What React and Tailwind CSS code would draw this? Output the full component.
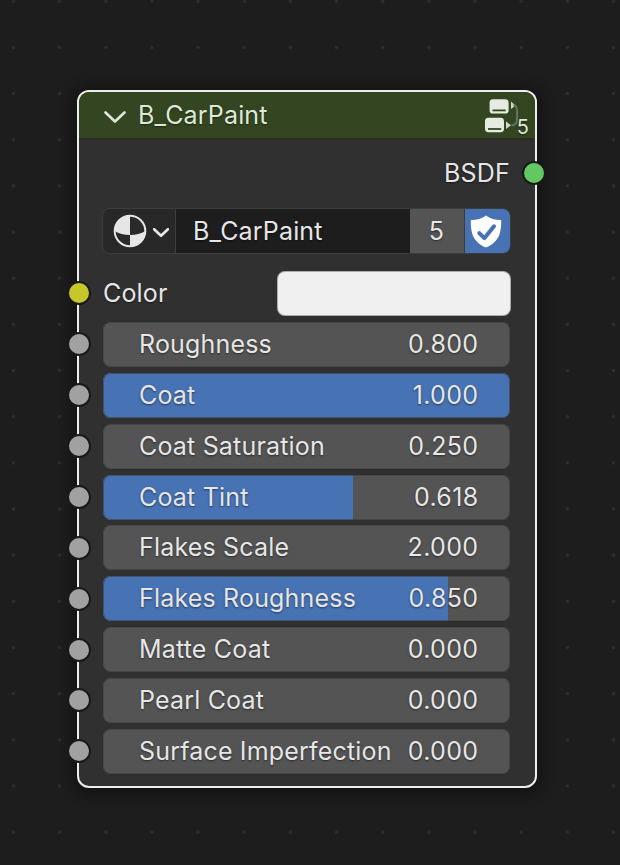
import clsx from 'clsx';

const sliders = [
    { label: 'Roughness', value: '0.800', fill: 0 },
    { label: 'Coat', value: '1.000', fill: 100 },
    { label: 'Coat Saturation', value: '0.250', fill: 0 },
    { label: 'Coat Tint', value: '0.618', fill: 61.5 },
    { label: 'Flakes Scale', value: '2.000', fill: 0 },
    { label: 'Flakes Roughness', value: '0.850', fill: 84.8 },
    { label: 'Matte Coat', value: '0.000', fill: 0 },
    { label: 'Pearl Coat', value: '0.000', fill: 0 },
    { label: 'Surface Imperfection', value: '0.000', fill: 0 },
];

const Socket = ({ className }) => (
    <span className={clsx('absolute top-1/2 -mt-3 h-6 w-6 rounded-full border-2 border-[#191919]', className)} />
);

const Chevron = ({ className, strokeWidth }) => (
    <svg className={className} viewBox="0 0 22 12" fill="none" stroke="currentColor" strokeWidth={strokeWidth} strokeLinecap="round" strokeLinejoin="round">
        <path d="M1.5 1.5 L11 10.5 L20.5 1.5" />
    </svg>
);

const NodeGroupIcon = () => (
    <svg className="h-[36px] w-[34px]" viewBox="0 0 34 36" fill="none">
        <rect x="5.6" y="2.2" width="19" height="14.4" rx="3.4" fill="#e6ebe2" />
        <path d="M8.5 13.4h13.2" stroke="#344621" strokeWidth="1.8" />
        <rect x="1" y="20.8" width="19" height="14.4" rx="3.4" fill="#e6ebe2" />
        <path d="M4 32h13.2" stroke="#344621" strokeWidth="1.8" />
        <path d="M27 4.5v7.5l4.5-3.5z" fill="#cfd8c8" />
        <path d="M22 24.5v7.5l5-3.7z" fill="#d3dacd" />
        <path d="M29.5 8q3.5 1 3.5 5v9.5q0 5.5-5.5 6" stroke="#65735a" strokeWidth="2" />
    </svg>
);

const MaterialIcon = () => (
    <svg className="h-[34px] w-[34px]" viewBox="0 0 34 34">
        <circle cx="17" cy="17" r="15.3" fill="#2a2a2a" stroke="#e6e6e6" strokeWidth="2" />
        <path d="M17 1.5V21Q8 21 1.6 17A15.4 15.4 0 0 1 17 1.5Z" fill="#e6e6e6" />
        <path d="M17 32.5V21Q26 21 32.4 17A15.4 15.4 0 0 1 17 32.5Z" fill="#e6e6e6" />
    </svg>
);

const ShieldIcon = () => (
    <svg className="h-[33px] w-[32px]" viewBox="0 0 32 33" fill="none">
        <path d="M16 .5C12 3.8 7 5 .8 5 .6 17 2.5 27 16 32.5 29.5 27 31.4 17 31.2 5 25 5 20 3.8 16 .5Z" fill="#fff" />
        <path d="M9.3 18.2l5 5L24 11.3" stroke="#4772b3" strokeWidth="4" strokeLinecap="round" strokeLinejoin="round" />
    </svg>
);

const Slider = ({ label, value, fill }) => (
    <div className="relative flex h-[50.87px] items-center pr-[25px] pl-[23.5px]">
        <div className="relative flex h-[45px] w-full items-center justify-between overflow-hidden rounded-lg bg-[#545454] pr-[31.5px] pl-[36.5px]">
            <div className="absolute inset-y-0 left-0 bg-[#4772b3]" style={{ width: `${fill}%` }} />
            <div className="pointer-events-none absolute inset-0 rounded-lg border border-[#3d3d3d]/60" />
            <span className="relative">{label}</span>
            <span className="relative tracking-[0.35px]">{value}</span>
        </div>
        <Socket className="-left-[12px] bg-[#a1a1a1]" />
    </div>
);

const App = () => {
    return (
        <div className="h-[865px] w-[620px] overflow-hidden bg-[#1d1d1d] bg-[radial-gradient(circle,#2d2d2d_1.3px,transparent_2.2px)] bg-[length:46.17px_46.17px] bg-[position:-9.6px_-21.8px] pt-[90px] pl-[77px] font-['Inter',sans-serif] text-[25px] leading-none tracking-[0.18px] whitespace-nowrap text-[#e6e6e6] text-shadow-[0_1px_2px_rgba(0,0,0,0.5)]">
            <div className="h-[698px] w-[460px] rounded-[12px] border-2 border-[#ededed] bg-[#303030] shadow-[0_2px_14px_4px_rgba(0,0,0,0.4)]">
                {/* Header */}
                <div className="flex h-[48px] items-center rounded-t-[10px] border-b-2 border-[#292d25] bg-[#344621] pl-[25px] text-[#dfe8d8]">
                    <Chevron className="mt-[3px] h-[12px] w-[22px]" strokeWidth={2.6} />
                    <span className="ml-[12px]">B_CarPaint</span>
                    <div className="relative mr-[17px] ml-auto">
                        <NodeGroupIcon />
                        <span className="absolute -right-[11px] bottom-[-4px] text-[20px]">5</span>
                    </div>
                </div>

                {/* Output */}
                <div className="relative mt-[8px] flex h-[50px] items-center justify-end pr-[25px]">
                    <span>BSDF</span>
                    <Socket className="-right-[11px] bg-[#63c763]" />
                </div>

                {/* Datablock selector */}
                <div className="mt-[10px] mr-[24.5px] ml-[23px] flex h-[46px] overflow-hidden rounded-lg border border-[#3d3d3d] bg-[#282828]">
                    <div className="flex w-[73px] items-center border-r border-[#3d3d3d] pl-[9.5px]">
                        <MaterialIcon />
                        <Chevron className="mt-[3px] ml-[6px] h-[9px] w-[16px]" strokeWidth={3.6} />
                    </div>
                    <div className="flex flex-1 items-center bg-[#1d1d1d] pl-[17px]">B_CarPaint</div>
                    <div className="flex w-[55px] items-center justify-center border-r border-[#3d3d3d] bg-[#545454]">5</div>
                    <div className="flex w-[45px] items-center justify-center bg-[#4772b3] pr-[2px]">
                        <ShieldIcon />
                    </div>
                </div>

                {/* Inputs */}
                <div className="relative mt-[13px] flex h-[52px] items-center justify-between pr-[24.5px] pl-[24px]">
                    <span>Color</span>
                    <div className="h-[45px] w-[234px] rounded-lg border border-[#444444]/40 bg-[#f0f0f0]" />
                    <Socket className="-left-[12px] bg-[#c7c729]" />
                </div>
                {sliders.map((slider) => (
                    <Slider key={slider.label} {...slider} />
                ))}
            </div>
        </div>
    );
};

export default App;
